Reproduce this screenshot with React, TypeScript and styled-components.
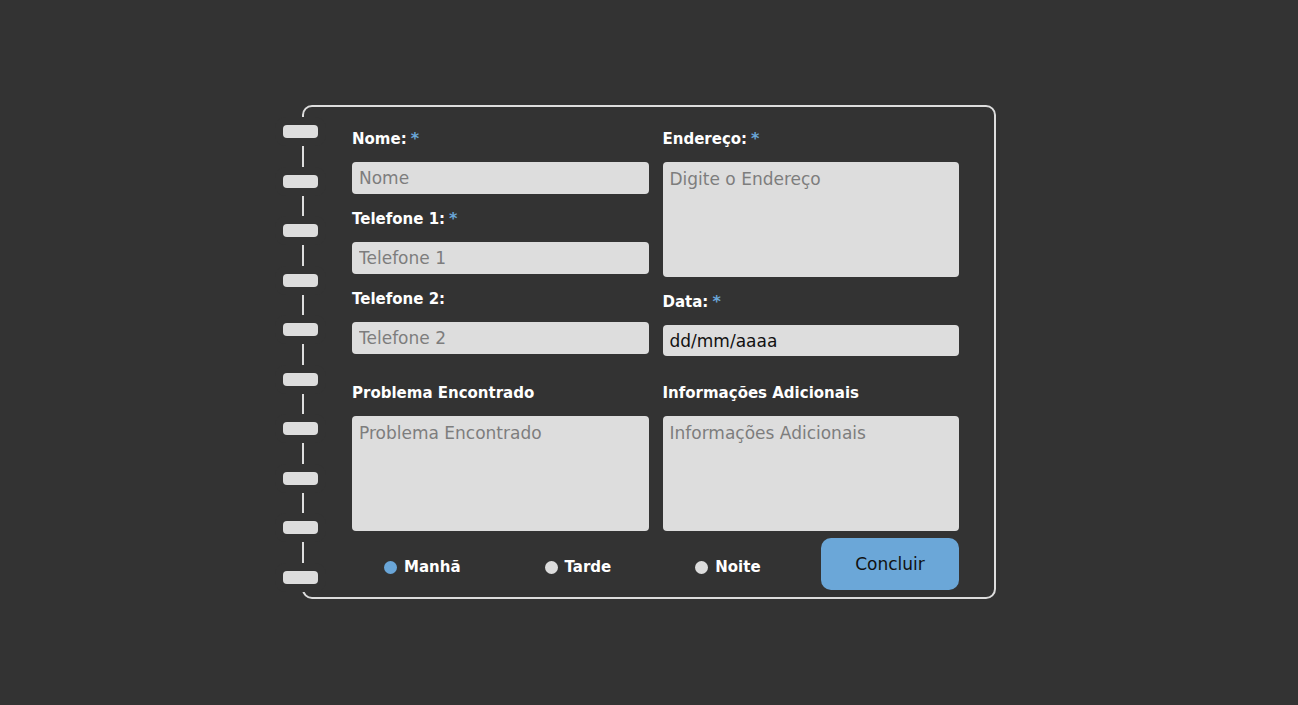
import { useState } from 'react';
import styled, { createGlobalStyle } from 'styled-components';

const GlobalStyle = createGlobalStyle`
  * {
    box-sizing: border-box;
  }
  body {
    margin: 0;
    background-color: #333333;
    font-family: 'DejaVu Sans', 'Noto Sans', sans-serif;
  }
`;

const Page = styled.div`
  min-height: 100vh;
  padding-top: 105px;
  display: flex;
  align-items: flex-start;
  justify-content: center;
`;

const Card = styled.form`
  position: relative;
  width: 694px;
  border: 2px solid #dddddd;
  border-radius: 10px;
  padding: 21px 35px 7px 48px;
  display: flex;
  flex-direction: column;
`;

const Spiral = styled.div`
  position: absolute;
  left: -21px;
  top: 18px;
  bottom: 13px;
  display: flex;
  flex-direction: column;
  justify-content: space-between;
`;

const Ring = styled.span`
  display: block;
  width: 35px;
  height: 13px;
  border-radius: 4px;
  background-color: #dddddd;
  box-shadow: 0 0 0 8px #333333;
`;

const Grid = styled.div<{ $mt?: number }>`
  display: grid;
  grid-template-columns: 1fr 1fr;
  column-gap: 14px;
  align-items: start;
  margin-top: ${(p) => p.$mt || 0}px;
`;

const Column = styled.div`
  display: flex;
  flex-direction: column;
  gap: 14px;
`;

const Label = styled.label`
  color: #ffffff;
  font-size: 15px;
  font-weight: 700;
  line-height: 22px;
  margin-bottom: -2px;
`;

const Star = styled.span`
  color: #6aa6d8;
  margin-left: 4px;
  font-size: 16px;
  font-weight: 700;
`;

const Input = styled.input<{ $h?: number }>`
  height: ${(p) => p.$h || 32}px;
  width: 100%;
  border: none;
  border-radius: 4px;
  background-color: #dddddd;
  padding: 0 7px;
  font-family: inherit;
  font-size: 17px;
  color: #111111;
  outline: none;
  &::placeholder {
    color: #7d7d7d;
  }
`;

const TextArea = styled.textarea`
  height: 115px;
  width: 100%;
  border: none;
  border-radius: 4px;
  background-color: #dddddd;
  padding: 7px 7px;
  font-family: inherit;
  font-size: 17px;
  line-height: 20px;
  color: #111111;
  resize: none;
  outline: none;
  &::placeholder {
    color: #7d7d7d;
  }
`;

const Footer = styled.div`
  margin-top: 7px;
  display: flex;
  align-items: center;
`;

const Shifts = styled.div`
  display: flex;
  align-items: center;
  gap: 84px;
  padding-left: 32px;
  padding-top: 6px;
`;

const Shift = styled.label`
  display: flex;
  align-items: center;
  gap: 7px;
  color: #ffffff;
  font-size: 15px;
  font-weight: 700;
  cursor: pointer;
`;

const Dot = styled.input`
  appearance: none;
  margin: 0;
  width: 13px;
  height: 13px;
  border-radius: 50%;
  background-color: #dddddd;
  cursor: pointer;
  &:checked {
    background-color: #6aa6d8;
  }
`;

const Button = styled.button`
  margin-left: auto;
  width: 138px;
  height: 52px;
  border: none;
  border-radius: 10px;
  background-color: #6ba7d8;
  color: #111111;
  font-family: inherit;
  font-size: 17px;
  cursor: pointer;
`;

const shifts = ['Manhã', 'Tarde', 'Noite'];

function App() {
  const [shift, setShift] = useState('Manhã');

  return (
    <>
      <GlobalStyle />
      <Page>
        <Card onSubmit={(e) => e.preventDefault()}>
          <Spiral>
            {Array.from({ length: 10 }).map((_, i) => (
              <Ring key={i} />
            ))}
          </Spiral>

          <Grid>
            <Column>
              <Label>
                Nome:<Star>*</Star>
              </Label>
              <Input placeholder="Nome" />
              <Label>
                Telefone 1:<Star>*</Star>
              </Label>
              <Input placeholder="Telefone 1" />
              <Label>Telefone 2:</Label>
              <Input placeholder="Telefone 2" />
            </Column>
            <Column>
              <Label>
                Endereço:<Star>*</Star>
              </Label>
              <TextArea placeholder="Digite o Endereço" />
              <Label>
                Data:<Star>*</Star>
              </Label>
              <Input $h={31} defaultValue="dd/mm/aaaa" />
            </Column>
          </Grid>

          <Grid $mt={26}>
            <Column>
              <Label>Problema Encontrado</Label>
              <TextArea placeholder="Problema Encontrado" />
            </Column>
            <Column>
              <Label>Informações Adicionais</Label>
              <TextArea placeholder="Informações Adicionais" />
            </Column>
          </Grid>

          <Footer>
            <Shifts>
              {shifts.map((s) => (
                <Shift key={s}>
                  <Dot
                    type="radio"
                    name="turno"
                    checked={shift === s}
                    onChange={() => setShift(s)}
                  />
                  {s}
                </Shift>
              ))}
            </Shifts>
            <Button type="submit">Concluir</Button>
          </Footer>
        </Card>
      </Page>
    </>
  );
}

export default App;
